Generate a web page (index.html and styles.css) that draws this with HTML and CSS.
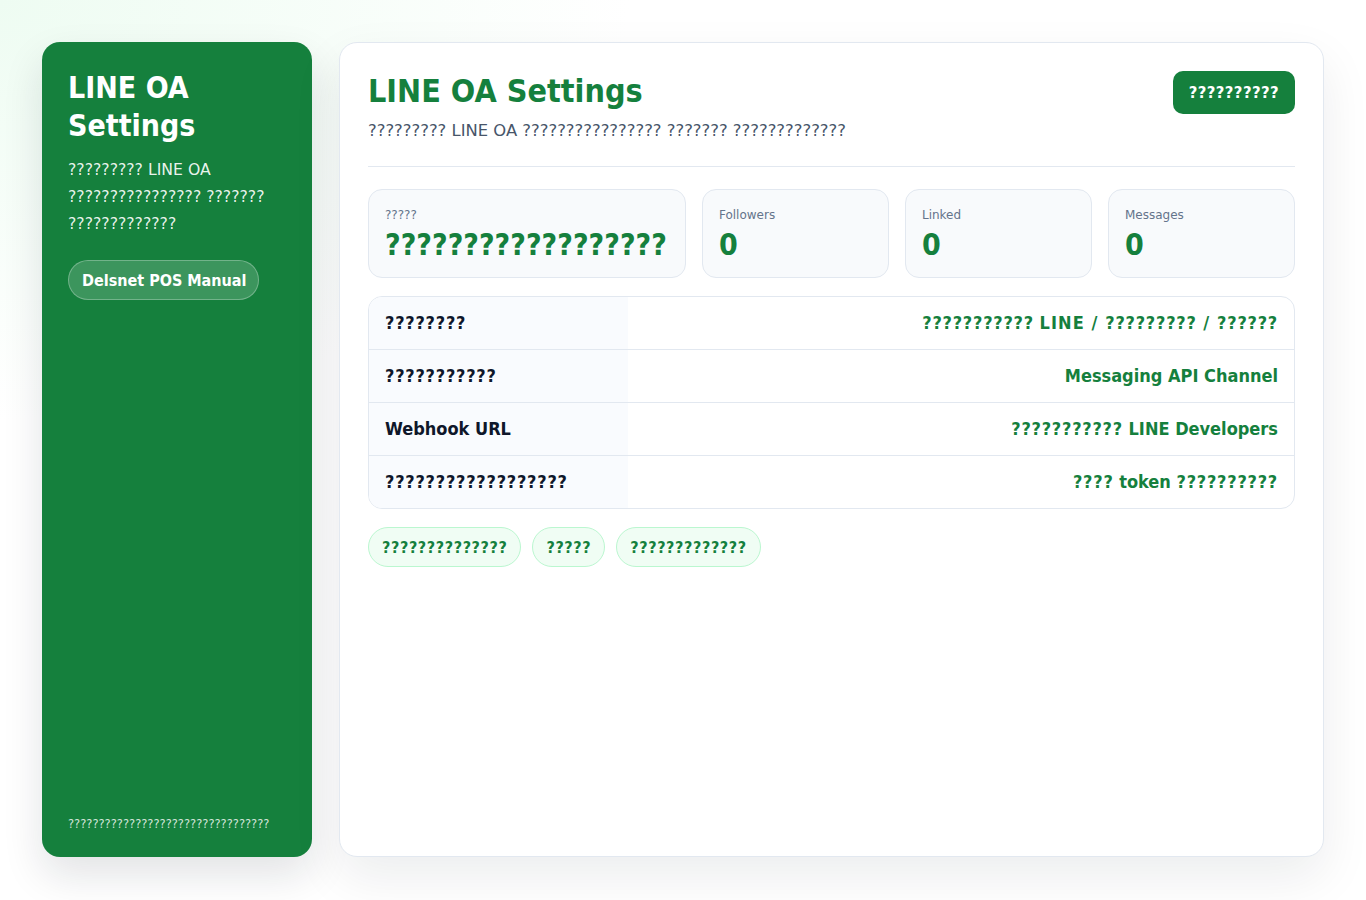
FILE: index.html
```html
<!DOCTYPE html>
<html lang="en">
<head>
<meta charset="utf-8">
<title>LINE OA Settings</title>
<link rel="stylesheet" href="styles.css">
</head>
<body>
<div class="layout">
  <aside class="sidebar">
    <h1 class="side-title">LINE OA Settings</h1>
    <p class="side-desc">????????? LINE OA ???????????????? ??????? ?????????????</p>
    <a class="side-btn" href="#">Delsnet POS Manual</a>
    <div class="side-foot">?????????????????????????????????</div>
  </aside>
  <main class="panel">
    <header class="panel-head">
      <div class="head-text">
        <h2 class="title">LINE OA Settings</h2>
        <p class="subtitle">????????? LINE OA ???????????????? ??????? ?????????????</p>
      </div>
      <button class="primary-btn">??????????</button>
    </header>
    <section class="stats">
      <div class="stat"><div class="stat-label">?????</div><div class="stat-value">??????????????????</div></div>
      <div class="stat"><div class="stat-label">Followers</div><div class="stat-value">0</div></div>
      <div class="stat"><div class="stat-label">Linked</div><div class="stat-value">0</div></div>
      <div class="stat"><div class="stat-label">Messages</div><div class="stat-value">0</div></div>
    </section>
    <section class="info">
      <div class="row"><div class="key q">????????</div><div class="val"><span class="q">???????????</span> <span class="w">LINE / </span><span class="q">?????????</span><span class="w"> / </span><span class="q">??????</span></div></div>
      <div class="row"><div class="key q">???????????</div><div class="val">Messaging API Channel</div></div>
      <div class="row"><div class="key">Webhook URL</div><div class="val"><span class="q">???????????</span> LINE Developers</div></div>
      <div class="row"><div class="key q">??????????????????</div><div class="val"><span class="q">????</span> token <span class="q">??????????</span></div></div>
    </section>
    <div class="chips">
      <span class="chip">??????????????</span>
      <span class="chip">?????</span>
      <span class="chip">?????????????</span>
    </div>
  </main>
</div>
</body>
</html>
```
FILE: styles.css
```css
* { box-sizing: border-box; }
html, body { margin: 0; padding: 0; }
body {
  font-family: "DejaVu Sans", Verdana, sans-serif;
  background:
    radial-gradient(ellipse 900px 600px at 0 0, #eefcf2 0%, rgba(255,255,255,0) 70%),
    #ffffff;
  min-height: 100vh;
  color: #0f172a;
}
.layout {
  display: grid;
  grid-template-columns: 270px 1fr;
  gap: 27px;
  padding: 42px 42px 43px 42px;
  height: 900px;
}
.sidebar {
  background: #15803d;
  border-radius: 18px;
  padding: 27px 26px 26px 26px;
  display: flex;
  flex-direction: column;
  align-items: flex-start;
  color: #fff;
  box-shadow: 0 18px 40px rgba(15, 23, 42, 0.12);
}
.side-title {
  margin: 0;
  font-family: "DejaVu Sans Condensed", "DejaVu Sans", sans-serif;
  font-stretch: condensed;
  font-weight: bold;
  font-size: 30px;
  line-height: 38px;
}
.side-desc {
  margin: 11px 0 0;
  font-size: 15.7px;
  line-height: 27px;
  color: rgba(255, 255, 255, 0.92);
}
.side-btn {
  margin-top: 23px;
  display: inline-flex;
  align-items: center;
  height: 40px;
  padding: 0 12px 0 13px;
  border-radius: 999px;
  background: rgba(255, 255, 255, 0.17);
  border: 1px solid rgba(255, 255, 255, 0.28);
  color: #fff;
  text-decoration: none;
  font-family: "DejaVu Sans Condensed", "DejaVu Sans", sans-serif;
  font-stretch: condensed;
  font-weight: bold;
  font-size: 16px;
}
.side-foot {
  margin-top: auto;
  font-size: 11.5px;
  line-height: 14px;
  color: rgba(255, 255, 255, 0.82);
}
.panel {
  background: #fff;
  border: 1px solid #e2e8f0;
  border-radius: 18px;
  padding: 28px;
  box-shadow: 0 20px 50px rgba(15, 23, 42, 0.08);
}
.panel-head {
  display: flex;
  justify-content: space-between;
  align-items: flex-start;
  padding-bottom: 23px;
  border-bottom: 1px solid #e2e8f0;
}
.title {
  margin: 0;
  font-family: "DejaVu Sans Condensed", "DejaVu Sans", sans-serif;
  font-stretch: condensed;
  font-weight: bold;
  font-size: 32px;
  line-height: 40px;
  color: #15803d;
}
.subtitle {
  margin: 8px 0 0;
  font-size: 16.4px;
  line-height: 24px;
  color: #475569;
}
.primary-btn {
  height: 43px;
  padding: 0 16px;
  border: none;
  border-radius: 10px;
  background: #15803d;
  color: #fff;
  font-family: "DejaVu Sans Condensed", "DejaVu Sans", sans-serif;
  font-stretch: condensed;
  font-weight: bold;
  font-size: 16.5px;
  letter-spacing: 0.025em;
}
.q { letter-spacing: 0.042em; }
.w { letter-spacing: 0.06em; }
.stats {
  margin-top: 22px;
  display: grid;
  grid-template-columns: 1.7fr 1fr 1fr 1fr;
  gap: 16px;
}
.stat {
  background: #f8fafc;
  border: 1px solid #e2e8f0;
  border-radius: 14px;
  padding: 17px 16px 17px;
  overflow: hidden;
}
.stat-label {
  font-size: 12px;
  line-height: 16px;
  color: #64748b;
}
.stat-value {
  margin-top: 7px;
  font-family: "DejaVu Sans Condensed", "DejaVu Sans", sans-serif;
  font-stretch: condensed;
  font-weight: bold;
  font-size: 30px;
  line-height: 30px;
  color: #15803d;
  white-space: nowrap;
}
.info {
  margin-top: 18px;
  border: 1px solid #e2e8f0;
  border-radius: 14px;
  overflow: hidden;
}
.row {
  display: grid;
  grid-template-columns: 28% 1fr;
  border-top: 1px solid #e2e8f0;
}
.row:first-child { border-top: none; }
.key, .val {
  font-family: "DejaVu Sans Condensed", "DejaVu Sans", sans-serif;
  font-stretch: condensed;
  font-weight: bold;
  font-size: 18px;
  line-height: 22px;
  padding: 15px 16px;
}
.key {
  background: #f9fbfe;
  color: #0f172a;
}
.val {
  text-align: right;
  color: #15803d;
}
.chips {
  margin-top: 18px;
  display: flex;
  gap: 11px;
}
.chip {
  display: inline-flex;
  align-items: center;
  height: 40px;
  padding: 0 13px;
  border-radius: 999px;
  background: #f0fdf4;
  border: 1px solid #bbf7d0;
  color: #15803d;
  font-family: "DejaVu Sans Condensed", "DejaVu Sans", sans-serif;
  font-stretch: condensed;
  font-weight: bold;
  font-size: 16px;
  letter-spacing: 0.038em;
}
```
